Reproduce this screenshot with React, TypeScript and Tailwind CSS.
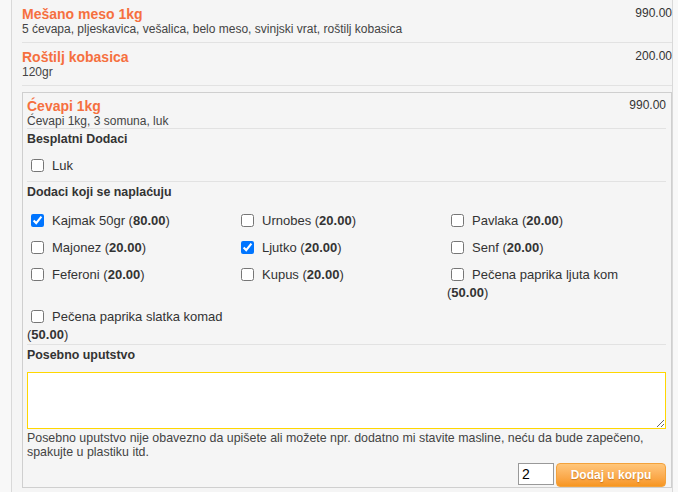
import React from "react";

type Extra = {
  label: string;
  price?: string;
  checked?: boolean;
  wrap?: boolean;
};

const paidExtras: Extra[] = [
  { label: "Kajmak 50gr", price: "80.00", checked: true },
  { label: "Urnobes", price: "20.00" },
  { label: "Pavlaka", price: "20.00" },
  { label: "Majonez", price: "20.00" },
  { label: "Ljutko", price: "20.00", checked: true },
  { label: "Senf", price: "20.00" },
  { label: "Feferoni", price: "20.00" },
  { label: "Kupus", price: "20.00" },
  { label: "Pečena paprika ljuta kom", price: "50.00", wrap: true },
  { label: "Pečena paprika slatka komad", price: "50.00", wrap: true },
];

const Check: React.FC<{ checked?: boolean }> = ({ checked }) => (
  <input
    type="checkbox"
    defaultChecked={checked}
    className="m-0 ml-[4px] mr-[8px] h-[13px] w-[13px] shrink-0 accent-[#0075ff]"
  />
);

const ExtraItem: React.FC<{ extra: Extra }> = ({ extra }) => (
  <div className="w-[210px] text-[13px] text-[#333]">
    <div className="flex h-[19px] items-center">
      <Check checked={extra.checked} />
      <span>
        {extra.label}
        {extra.price && !extra.wrap && (
          <>
            {" "}
            (<b>{extra.price}</b>)
          </>
        )}
      </span>
    </div>
    {extra.wrap && (
      <div className="pt-[2px] leading-[13px]">
        (<b>{extra.price}</b>)
      </div>
    )}
  </div>
);

const MenuItem: React.FC<{ title: string; desc: string; price: string }> = ({
  title,
  desc,
  price,
}) => (
  <div className="border-b border-[#e2e2e2] pt-[6px] pb-[6px]">
    <div className="flex items-start justify-between">
      <div className="text-[14px] font-bold leading-[17px] text-[#f5703f]">{title}</div>
      <div className="leading-[15px] text-[#333]">{price}</div>
    </div>
    <div className="leading-[13px] text-[#444]">{desc}</div>
  </div>
);

export default function App() {
  return (
    <div className="h-[492px] w-[678px] overflow-hidden bg-[#f8f8f8] font-['Liberation_Sans',Arial,sans-serif] text-[12px]">
      <div className="ml-[11px] h-full w-[662px] border-l border-r border-[#d9d9d9] bg-[#f5f5f5] pl-[10px]">
        <MenuItem
          title="Mešano meso 1kg"
          desc="5 ćevapa, pljeskavica, vešalica, belo meso, svinjski vrat, roštilj kobasica"
          price="990.00"
        />
        <MenuItem title="Roštilj kobasica" desc="120gr" price="200.00" />

        <div className="mt-[6px] border border-[#cfcfcf] pl-[4px] pr-[5px] pt-[5px]">
          <div className="border-b border-[#e2e2e2]">
            <div className="flex items-start justify-between">
              <div className="text-[14px] font-bold leading-[17px] text-[#f5703f]">Ćevapi 1kg</div>
              <div className="leading-[15px] text-[#333]">990.00</div>
            </div>
            <div className="leading-[13px] text-[#444]">Ćevapi 1kg, 3 somuna, luk</div>
          </div>

          <div className="mt-[2px] text-[12.4px] font-bold leading-[16px] text-[#333]">Besplatni Dodaci</div>
          <div className="border-b border-[#e2e2e2] pt-[9px] pb-[6px]">
            <ExtraItem extra={{ label: "Luk" }} />
          </div>

          <div className="mt-[2px] text-[12.4px] font-bold leading-[16px] text-[#333]">Dodaci koji se naplaćuju</div>
          <div className="flex flex-wrap gap-y-[8px] border-b border-[#e2e2e2] pt-[11px] pb-[3px]">
            {paidExtras.map((e) => (
              <ExtraItem key={e.label} extra={e} />
            ))}
          </div>

          <div className="mt-[2px] text-[12.4px] font-bold leading-[16px] text-[#333]">Posebno uputstvo</div>
          <textarea
            className="mt-[9px] block h-[57px] w-full border border-solid border-[#ffd700] bg-white outline-none"
          />
          <div className="mt-[2px] text-[12.4px] leading-[14px] text-[#444]">
            Posebno uputstvo nije obavezno da upišete ali možete npr. dodatno mi stavite masline, neću da bude zapečeno,
            spakujte u plastiku itd.
          </div>

          <div className="mt-[4px] flex justify-end">
            <input
              type="text"
              defaultValue="2"
              className="h-[22px] w-[36px] border border-[#999] bg-white px-[3px] text-[14px] text-black outline-none"
            />
            <button
              type="button"
              className="ml-[2px] h-[24px] w-[110px] rounded-[4px] border border-[#f3a23c] bg-gradient-to-b from-[#ffc67a] to-[#f7961f] text-[12px] font-bold text-white [text-shadow:0_1px_1px_rgba(160,80,0,0.5)]"
            >
              Dodaj u korpu
            </button>
          </div>
        </div>
      </div>
    </div>
  );
}
